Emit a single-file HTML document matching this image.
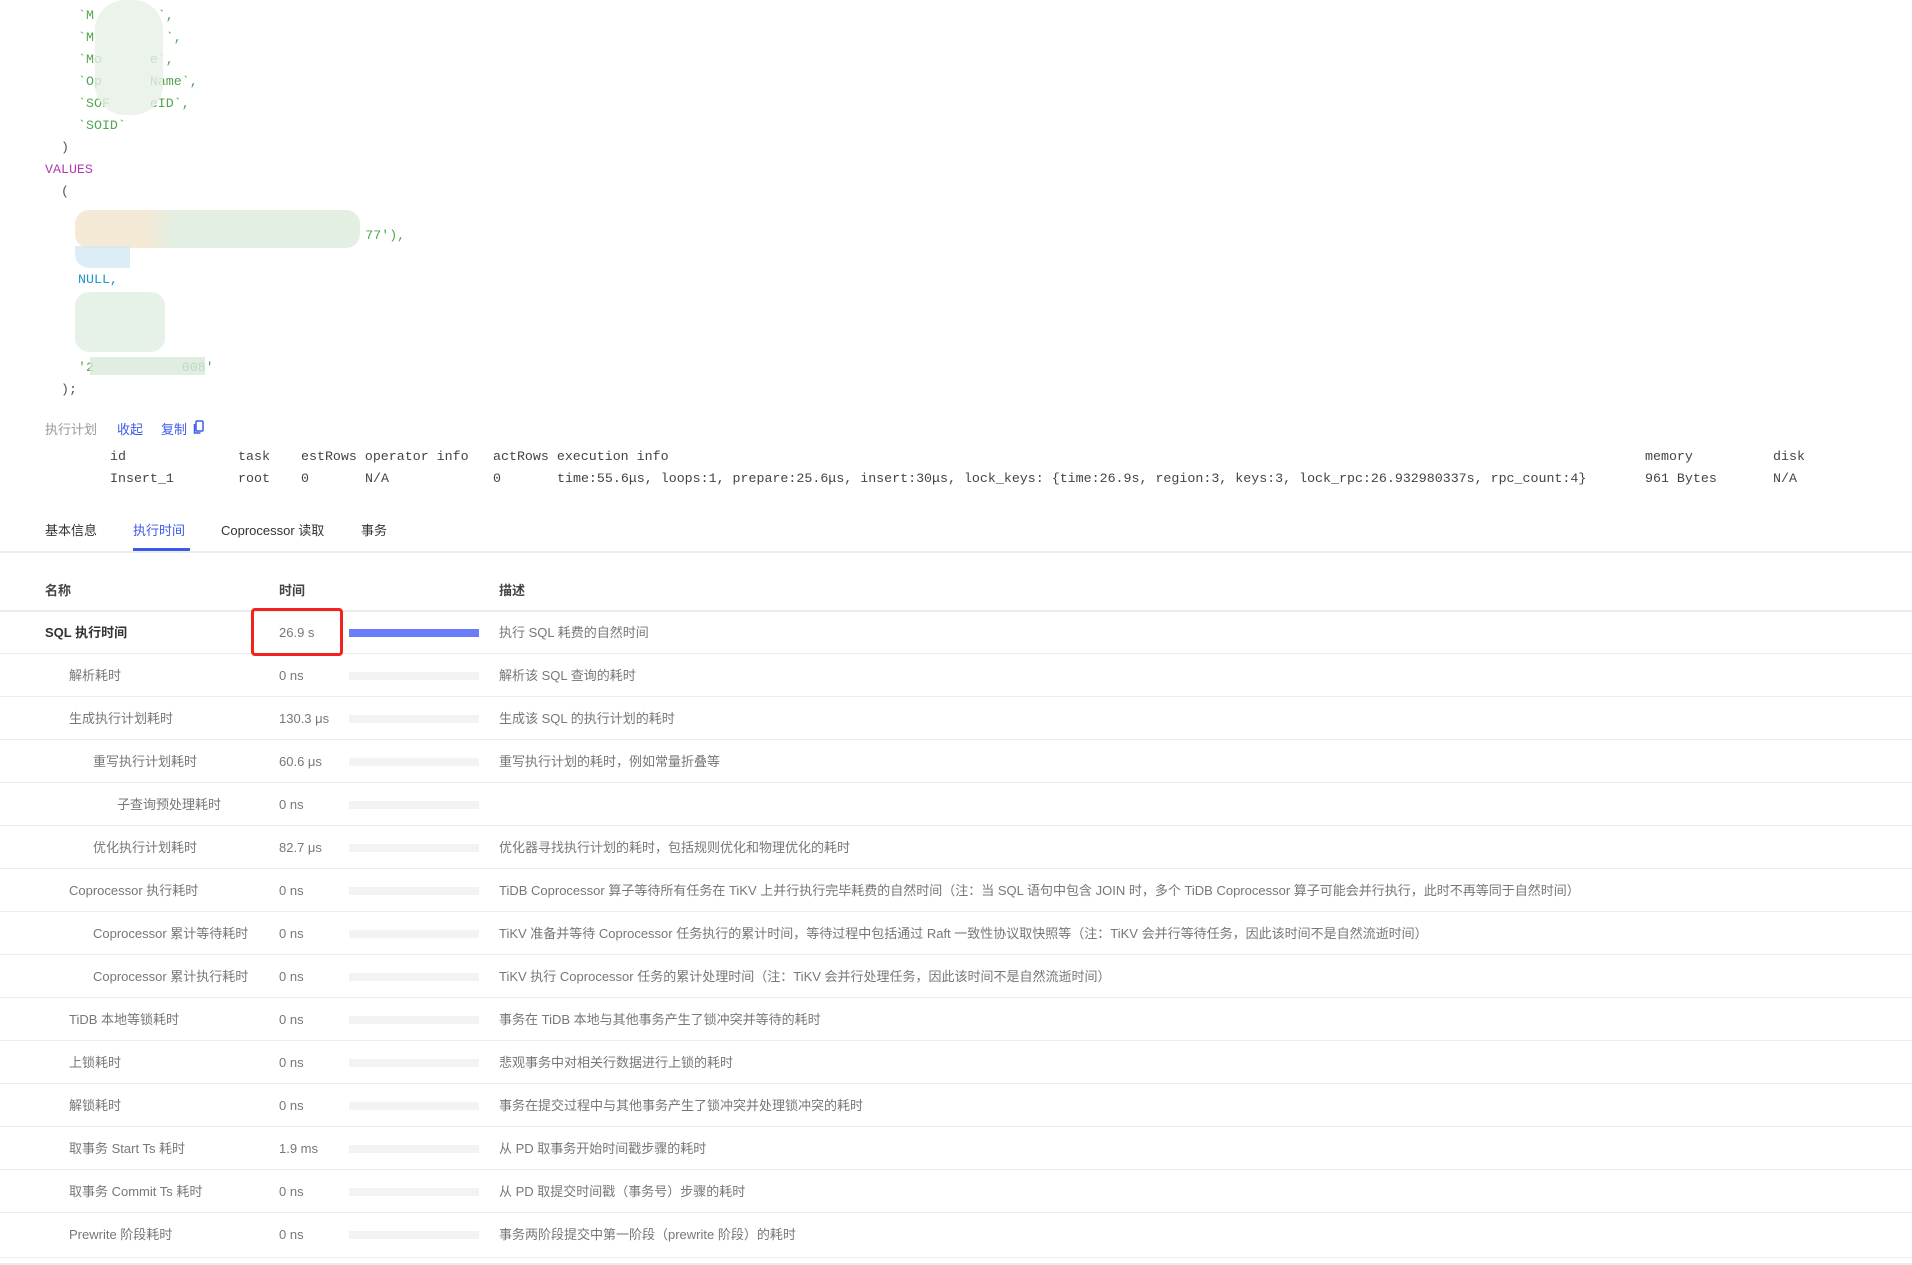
<!DOCTYPE html>
<html><head><meta charset="utf-8"><style>
*{margin:0;padding:0;box-sizing:border-box}
body{width:1912px;height:1265px;background:#fff;position:relative;overflow:hidden;font-family:"Liberation Sans","Noto Sans CJK SC",sans-serif;color:#333}
.a{position:absolute;white-space:pre}
.m{font-family:"Liberation Mono","Noto Sans CJK SC",monospace;font-size:13.3px;line-height:22px;color:#444}
.g{color:#4fa64f}.p{color:#555}
.blur{position:absolute;background:#dcebdc;opacity:.8}
.s{font-size:13px;line-height:43px;height:43px}
.row{position:absolute;left:0;width:1912px;height:43px;border-bottom:1.5px solid #ececec}
.bar{position:absolute;left:349px;width:130px;height:8px;background:#f3f3f3}
</style></head><body>
<div class="a m g" style="left:78px;top:5px">`M        `,</div>
<div class="a m g" style="left:78px;top:27px">`M         `,</div>
<div class="a m g" style="left:78px;top:49px">`Mo      e`,</div>
<div class="a m g" style="left:78px;top:71px">`Op      Name`,</div>
<div class="a m g" style="left:78px;top:93px">`SOF     eID`,</div>
<div class="a m g" style="left:78px;top:115px">`SOID`</div>
<div class="a m p" style="left:61px;top:137px">)</div>
<div class="a m" style="left:45px;top:159px;color:#b23bb2">VALUES</div>
<div class="a m p" style="left:61px;top:181px">(</div>
<div class="a m g" style="left:78px;top:225px">                                    77'),</div>
<div class="a m" style="left:78px;top:269px;color:#1e96c8">NULL,</div>
<div class="a m g" style="left:78px;top:357px">'2           008'</div>
<div class="a m p" style="left:61px;top:379px">);</div>
<div class="blur" style="left:95px;top:0;width:68px;height:115px;border-radius:30px;background:#e6f0e6"></div>
<div class="blur" style="left:75px;top:210px;width:285px;height:38px;border-radius:14px;background:linear-gradient(90deg,#f1e4cc 0,#f1e4cc 25%,#dcebdc 35%)"></div>
<div class="blur" style="left:75px;top:246px;width:55px;height:22px;border-radius:0 0 0 14px;background:#d4e8f2"></div>
<div class="blur" style="left:75px;top:292px;width:90px;height:60px;border-radius:14px;background:#e0eee2"></div>
<div class="blur" style="left:90px;top:357px;width:115px;height:18px;background:#d8e9d8"></div>

<div class="a" style="left:45px;top:419px;font-size:13px;color:#999">执行计划</div>
<div class="a" style="left:117px;top:419px;font-size:13px;color:#3c5ae8">收起</div>
<div class="a" style="left:161px;top:419px;font-size:13px;color:#3c5ae8">复制</div>
<svg class="a" style="left:193px;top:420px" width="12" height="15" viewBox="0 0 12 15"><rect x="3" y="1" width="7" height="10" rx="1" fill="none" stroke="#3c5ae8" stroke-width="1.5"/><path d="M1.5 4v9h6" fill="none" stroke="#3c5ae8" stroke-width="1.5"/></svg>

<div class="a m" style="left:110px;top:446px">id</div>
<div class="a m" style="left:238px;top:446px">task</div>
<div class="a m" style="left:301px;top:446px">estRows operator info</div>
<div class="a m" style="left:493px;top:446px">actRows execution info</div>
<div class="a m" style="left:1645px;top:446px">memory</div>
<div class="a m" style="left:1773px;top:446px">disk</div>
<div class="a m" style="left:110px;top:468px">Insert_1</div>
<div class="a m" style="left:238px;top:468px">root</div>
<div class="a m" style="left:301px;top:468px">0</div>
<div class="a m" style="left:365px;top:468px">N/A</div>
<div class="a m" style="left:493px;top:468px">0</div>
<div class="a m" style="left:557px;top:468px">time:55.6μs, loops:1, prepare:25.6μs, insert:30μs, lock_keys: {time:26.9s, region:3, keys:3, lock_rpc:26.932980337s, rpc_count:4}</div>
<div class="a m" style="left:1645px;top:468px">961 Bytes</div>
<div class="a m" style="left:1773px;top:468px">N/A</div>

<div class="a" style="left:45px;top:520px;font-size:13px;color:#333">基本信息</div>
<div class="a" style="left:133px;top:520px;font-size:13px;color:#3c5ae8">执行时间</div>
<div class="a" style="left:221px;top:520px;font-size:13px;color:#333">Coprocessor 读取</div>
<div class="a" style="left:361px;top:520px;font-size:13px;color:#333">事务</div>
<div class="a" style="left:133px;top:548px;width:57px;height:3px;background:#3c5ae8"></div>
<div class="a" style="left:0;top:551px;width:1912px;height:1.5px;background:#ececec"></div>

<div class="a" style="left:45px;top:580px;font-size:13px;font-weight:bold;color:#444">名称</div>
<div class="a" style="left:279px;top:580px;font-size:13px;font-weight:bold;color:#444">时间</div>
<div class="a" style="left:499px;top:580px;font-size:13px;font-weight:bold;color:#444">描述</div>
<div class="a" style="left:0;top:610px;width:1912px;height:1.5px;background:#ececec"></div>

<div class="row" style="top:611px"><span class="a s" style="left:45px;color:#333;font-weight:bold">SQL 执行时间</span><span class="a s" style="left:279px;color:#777">26.9 s</span><div class="bar" style="top:18px;background:#6b7cf9"></div><span class="a s" style="left:499px;color:#777">执行 SQL 耗费的自然时间</span></div>
<div class="row" style="top:654px"><span class="a s" style="left:69px;color:#777">解析耗时</span><span class="a s" style="left:279px;color:#777">0 ns</span><div class="bar" style="top:18px"></div><span class="a s" style="left:499px;color:#777">解析该 SQL 查询的耗时</span></div>
<div class="row" style="top:697px"><span class="a s" style="left:69px;color:#777">生成执行计划耗时</span><span class="a s" style="left:279px;color:#777">130.3 μs</span><div class="bar" style="top:18px"></div><span class="a s" style="left:499px;color:#777">生成该 SQL 的执行计划的耗时</span></div>
<div class="row" style="top:740px"><span class="a s" style="left:93px;color:#777">重写执行计划耗时</span><span class="a s" style="left:279px;color:#777">60.6 μs</span><div class="bar" style="top:18px"></div><span class="a s" style="left:499px;color:#777">重写执行计划的耗时，例如常量折叠等</span></div>
<div class="row" style="top:783px"><span class="a s" style="left:117px;color:#777">子查询预处理耗时</span><span class="a s" style="left:279px;color:#777">0 ns</span><div class="bar" style="top:18px"></div></div>
<div class="row" style="top:826px"><span class="a s" style="left:93px;color:#777">优化执行计划耗时</span><span class="a s" style="left:279px;color:#777">82.7 μs</span><div class="bar" style="top:18px"></div><span class="a s" style="left:499px;color:#777">优化器寻找执行计划的耗时，包括规则优化和物理优化的耗时</span></div>
<div class="row" style="top:869px"><span class="a s" style="left:69px;color:#777">Coprocessor 执行耗时</span><span class="a s" style="left:279px;color:#777">0 ns</span><div class="bar" style="top:18px"></div><span class="a s" style="left:499px;color:#777">TiDB Coprocessor 算子等待所有任务在 TiKV 上并行执行完毕耗费的自然时间（注：当 SQL 语句中包含 JOIN 时，多个 TiDB Coprocessor 算子可能会并行执行，此时不再等同于自然时间）</span></div>
<div class="row" style="top:912px"><span class="a s" style="left:93px;color:#777">Coprocessor 累计等待耗时</span><span class="a s" style="left:279px;color:#777">0 ns</span><div class="bar" style="top:18px"></div><span class="a s" style="left:499px;color:#777">TiKV 准备并等待 Coprocessor 任务执行的累计时间，等待过程中包括通过 Raft 一致性协议取快照等（注：TiKV 会并行等待任务，因此该时间不是自然流逝时间）</span></div>
<div class="row" style="top:955px"><span class="a s" style="left:93px;color:#777">Coprocessor 累计执行耗时</span><span class="a s" style="left:279px;color:#777">0 ns</span><div class="bar" style="top:18px"></div><span class="a s" style="left:499px;color:#777">TiKV 执行 Coprocessor 任务的累计处理时间（注：TiKV 会并行处理任务，因此该时间不是自然流逝时间）</span></div>
<div class="row" style="top:998px"><span class="a s" style="left:69px;color:#777">TiDB 本地等锁耗时</span><span class="a s" style="left:279px;color:#777">0 ns</span><div class="bar" style="top:18px"></div><span class="a s" style="left:499px;color:#777">事务在 TiDB 本地与其他事务产生了锁冲突并等待的耗时</span></div>
<div class="row" style="top:1041px"><span class="a s" style="left:69px;color:#777">上锁耗时</span><span class="a s" style="left:279px;color:#777">0 ns</span><div class="bar" style="top:18px"></div><span class="a s" style="left:499px;color:#777">悲观事务中对相关行数据进行上锁的耗时</span></div>
<div class="row" style="top:1084px"><span class="a s" style="left:69px;color:#777">解锁耗时</span><span class="a s" style="left:279px;color:#777">0 ns</span><div class="bar" style="top:18px"></div><span class="a s" style="left:499px;color:#777">事务在提交过程中与其他事务产生了锁冲突并处理锁冲突的耗时</span></div>
<div class="row" style="top:1127px"><span class="a s" style="left:69px;color:#777">取事务 Start Ts 耗时</span><span class="a s" style="left:279px;color:#777">1.9 ms</span><div class="bar" style="top:18px"></div><span class="a s" style="left:499px;color:#777">从 PD 取事务开始时间戳步骤的耗时</span></div>
<div class="row" style="top:1170px"><span class="a s" style="left:69px;color:#777">取事务 Commit Ts 耗时</span><span class="a s" style="left:279px;color:#777">0 ns</span><div class="bar" style="top:18px"></div><span class="a s" style="left:499px;color:#777">从 PD 取提交时间戳（事务号）步骤的耗时</span></div>
<div class="row" style="top:1213px;height:45px"><span class="a s" style="left:69px;color:#777">Prewrite 阶段耗时</span><span class="a s" style="left:279px;color:#777">0 ns</span><div class="bar" style="top:18px"></div><span class="a s" style="left:499px;color:#777">事务两阶段提交中第一阶段（prewrite 阶段）的耗时</span></div>
<div class="a" style="left:0;top:1263px;width:1912px;height:2px;background:#ececec"></div>

<div class="a" style="left:251px;top:608px;width:92px;height:48px;border:3.5px solid #f5221b;border-radius:4px"></div>
</body></html>
